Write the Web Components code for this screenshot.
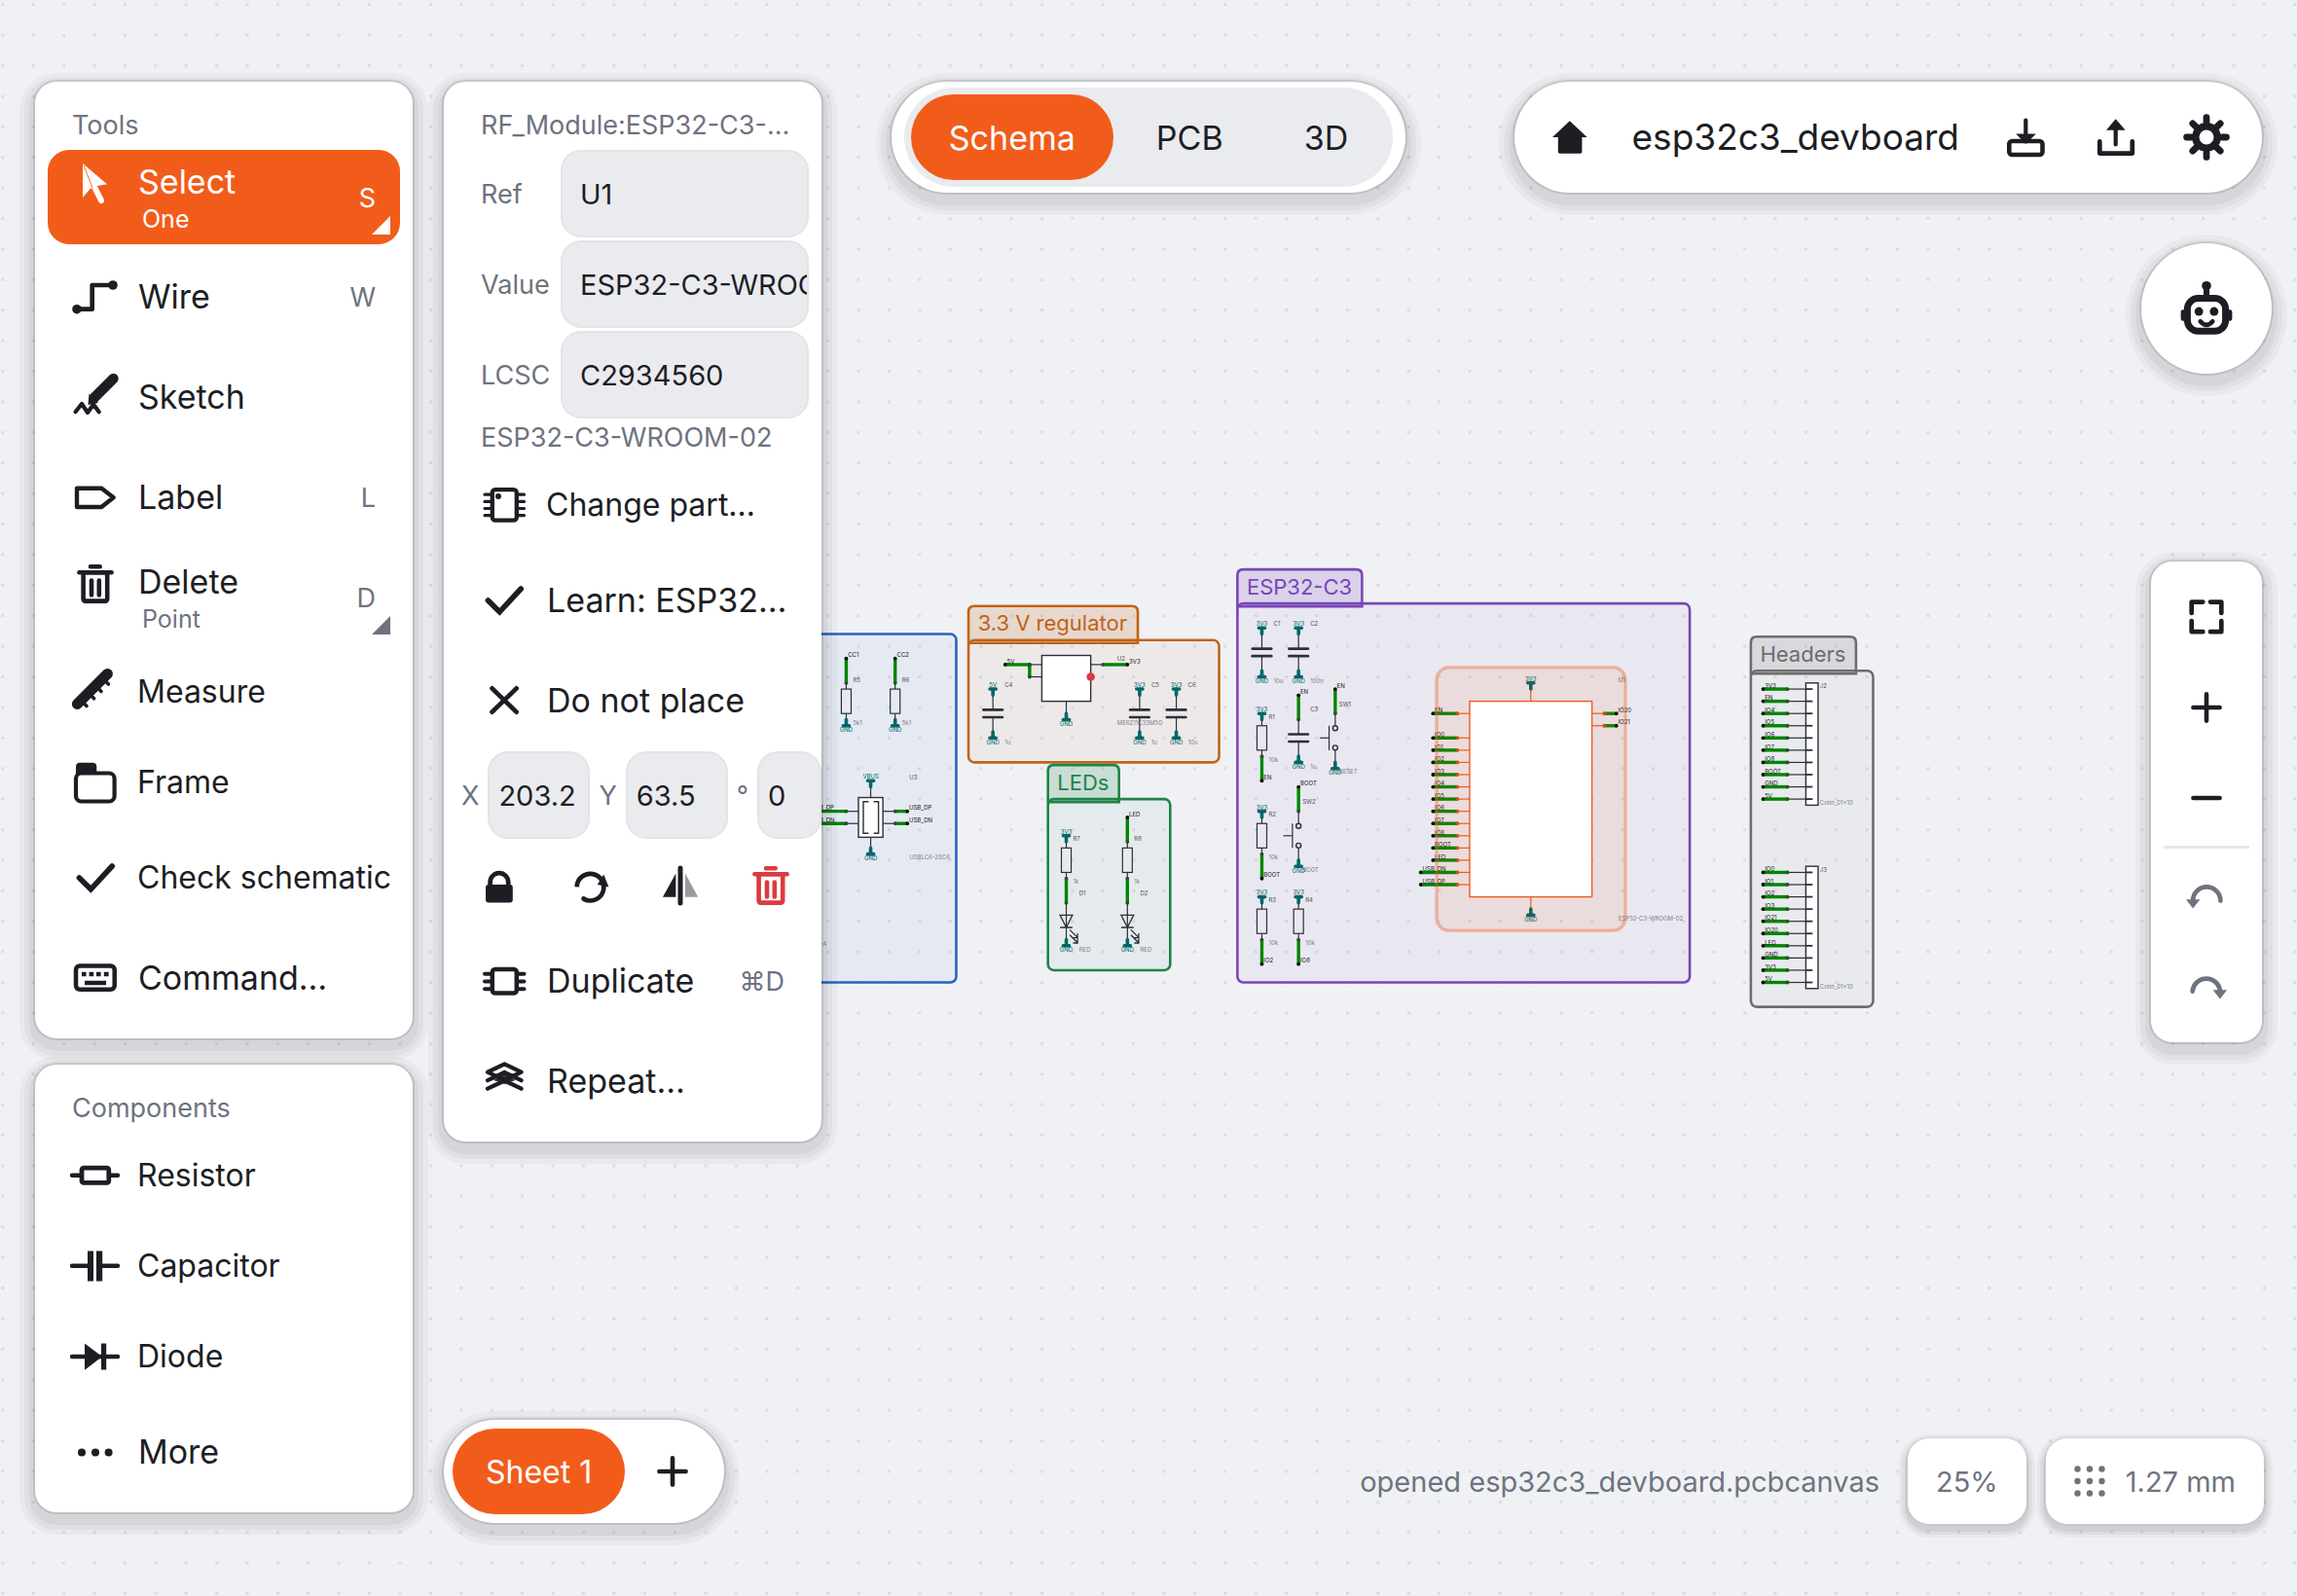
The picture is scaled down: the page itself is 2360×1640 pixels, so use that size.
<!DOCTYPE html>
<html lang="en">
<head>
<meta charset="utf-8">
<title>esp32c3_devboard</title>
<style>
  html, body { margin: 0; height: 100%; }
  body {
    --ink: #1d1e24; --muted: #6e737f; --accent: #f25c1b; --field: #eaebef; --line: #e4e4e5; --danger: #dc3b3e;
    background: #f0f1f5; color: var(--ink);
    font-family: Inter, "Liberation Sans", sans-serif; font-size: 34px; font-optical-sizing: none;
  }
</style>
</head>
<body>
<eda-app></eda-app>
<script>
const define = (name, css, html, setup) => {
  const tpl = document.createElement('template');
  customElements.define(name, class extends HTMLElement {
    connectedCallback() {
      if (this.shadowRoot) return;
      const root = this.attachShadow({ mode: 'open' });
      tpl.innerHTML = `<style>*{box-sizing:border-box}button,input{font:inherit;color:inherit;margin:0;border:0;background:none;padding:0}${css}</style>${typeof html === 'function' ? html(this) : html}`;
      root.append(tpl.content.cloneNode(true));
      if (setup) setup(this, root);
    }
  });
};

/* ---------- icons ---------- */
const trash = '<g stroke-width="4.6"><path d="M19 6.2H28.7M7.4 12.2H40.6"/><rect x="11.6" y="12.2" width="24.6" height="29.4" rx="2"/><path d="M20 20.5V35.5M27.8 20.5V35.5"/></g>';
const ICONS = {
  select: '<path class="f" d="M11 3L36 24.3L25 26.2L18.6 29L11 38Z"/><path stroke-width="6" d="M23 27L30 41"/><path stroke="#f25c1b" stroke-width=".9" d="M12 5L21 28"/>',
  wire: '<path stroke-width="4.7" d="M5 36.7H20.7V12H42"/><circle class="f" cx="5" cy="36.7" r="4.8"/><circle class="f" cx="42" cy="12" r="4.8"/>',
  sketch: '<path stroke-width="10.4" d="M42.5 5L23 24.5"/><path class="f" d="M17.5 20.5L27 30L16.5 32Z"/><path stroke-width="4.2" d="M3.5 39.2L10 31L16 40L22 31.5L27.7 39.2"/>',
  label: '<path stroke-width="4.4" d="M5 14.7H30.3L42.6 24.2L30.3 34H5Z"/>',
  trash,
  measure: '<path stroke-width="11" d="M5.4 36.4L36.4 5.4"/><path stroke-width="3.6" d="M9 32.4L15 38.4M16.6 24.8L22.6 30.8M24 17.4L30 23.4M31.4 10L37.4 16"/>',
  frame: '<rect x="4" y="14.5" width="39.6" height="29" rx="5.5" stroke-width="4.2"/><path class="f" d="M4 20V8q0-4.2 4.2-4.2H21q4.3 0 4.3 4.2V16H8Z"/>',
  check: '<path stroke-width="5.6" stroke-linejoin="miter" d="M7.4 24L19.3 35.8L41.2 12"/>',
  keyboard: '<rect x="4" y="11.4" width="39.7" height="24.4" rx="4" stroke-width="4.5"/><path class="f" d="M10 17.8h4.6v4.4H10zM17.6 17.8h4.6v4.4h-4.6zM25 17.8h4.6v4.4H25zM32.8 17.8h4.8v4.4h-4.8zM13 26.8h22v4.4H13z"/>',
  resistor: '<path stroke-width="4.4" d="M0 23.8H8M40 23.8H47"/><rect x="10" y="16.2" width="27.8" height="15.2" rx="2" stroke-width="4.8"/>',
  capacitor: '<path stroke-width="4.4" d="M0 23.8H16M31 23.8H47"/><path class="f" d="M16 8.6h6v30.8h-6zM25 8.6h6.2v30.8H25z"/>',
  diode: '<path stroke-width="4.4" d="M0 24H47"/><path class="f" d="M13 10.6L31 24L13 37.7ZM30 10.6h5.2v27H30z"/>',
  more: '<g class="f"><circle cx="10" cy="24.4" r="4"/><circle cx="24" cy="24.4" r="4"/><circle cx="37.6" cy="24.4" r="4"/></g>',
  chip: '<rect x="11.8" y="8.2" width="25" height="31.4" rx="3" stroke-width="4.3"/><path stroke-width="3.2" d="M4 13.2H10M4 20.4H10M4 27.5H10M4 34.6H10M38.5 13.2H44.5M38.5 20.4H44.5M38.5 27.5H44.5M38.5 34.6H44.5"/><circle class="f" cx="18" cy="15" r="3"/>',
  cross: '<path stroke-width="4.8" d="M11.6 11.4L36.6 35.6M36.6 11.4L11.6 35.6"/>',
  lock: '<rect class="f" x="10" y="23" width="27.8" height="18.6" rx="3"/><path stroke-width="4.7" d="M14.6 26V20.4a9.3 9.3 0 0 1 18.6 0V26"/>',
  rotate: '<g transform="translate(1.8 1)"><path stroke-width="4.7" d="M15.8 36.6A13.8 13.8 0 1 0 8.9 24.4" stroke-linecap="butt"/><circle class="f" cx="15.8" cy="36.4" r="2.4"/><path class="f" d="M36.5 11.6L41.6 24.4L30 22Z"/></g>',
  flip: '<path stroke-width="5" d="M24 6V42"/><path class="f" d="M19.4 11.6V35.8H6Z"/><path class="f" opacity=".45" d="M29 11.6V35.8H42.2Z"/>',
  duplicate: '<rect x="11.8" y="12" width="25" height="24.6" rx="3" stroke-width="4.5"/><path stroke-width="4" d="M4 16.7H10M4 24.4H10M4 32.2H10M38.5 16.7H44.5M38.5 24.4H44.5M38.5 32.2H44.5"/>',
  repeat: '<path stroke-width="4.2" d="M24.3 15L7 23.2M24.3 15L41.6 23.2M7 14.7L24.3 6.4L41.6 14.7L24.3 23Z"/><path stroke-width="4.2" d="M7 31.7L24.3 23.5L41.6 31.7"/><path class="f" d="M13 23L24.3 16L35.6 23L24.3 27Z" opacity=".9"/>',
  home: '<path class="f" d="M23.8 7.2L41.6 24H36.4V39q0 1.8-1.8 1.8H13.6q-1.8 0-1.8-1.8V24H6Z"/>',
  download: '<path stroke-width="4.2" d="M24.3 6.6V22"/><rect x="7.3" y="28" width="34.2" height="14" rx="3" stroke-width="4.6"/><path class="f" d="M14.2 20.6H34.8L24.3 31Z"/>',
  upload: '<path stroke-width="4.2" d="M23.7 12V31.4"/><path class="f" d="M23.7 5.2L33.6 16.8H14Z"/><path stroke-width="4.7" d="M7.3 28.4V40.6H40.8V28.4"/>',
  gear: '<circle cx="24" cy="24" r="11.2" stroke-width="7.4"/><path stroke-width="6.8" d="M24 8V3.6M24 40V44.4M8 24H3.6M40 24H44.4M13 13L9.8 9.8M35 13L38.2 9.8M13 35L9.8 38.2M35 35L38.2 38.2"/>',
  fit: '<path stroke-width="4.7" d="M8.7 20V8.6H20.3M28 8.6H39.3V20M39.3 28V39.2H28M20.3 39.2H8.7V28"/>',
  plus: '<path stroke-width="4.6" d="M24 10.4V37.6M10.4 24H37.6"/>',
  minus: '<path stroke-width="4.6" d="M10.4 24H37.6"/>',
  undo: '<path stroke-width="4.7" d="M10 28.6A14.2 14.2 0 0 1 38.4 28.6"/><path class="f" d="M3 27.2H17.4L10 36.6Z"/>',
  redo: '<path stroke-width="4.7" d="M9.7 28.6A14.2 14.2 0 0 1 38 28.6"/><path class="f" d="M30.6 27.2H45L38 36.6Z"/>',
  grid: '<g class="f">' + [11.5, 24, 36.5].map(y => [11.5, 24, 36.5].map(x => `<circle cx="${x}" cy="${y}" r="3.2"/>`).join('')).join('') + '</g>',
  robot: '<circle class="f" cx="24" cy="4" r="4.1"/><path stroke-width="5.2" d="M24 6V13"/><rect x="7.2" y="15" width="33.6" height="29" rx="9.5" stroke-width="6"/><rect class="f" x="1.4" y="25" width="5" height="10" rx="2"/><rect class="f" x="41.6" y="25" width="5" height="10" rx="2"/><circle class="f" cx="17.3" cy="26.6" r="3.8"/><circle class="f" cx="30.7" cy="26.6" r="3.8"/><path stroke-width="4" d="M18.6 35.4Q24 41.6 29.4 35.4"/>'
};
define('eda-icon', `
  :host{display:block;flex:none;width:48px;height:48px}
  :host([large]){width:56px;height:56px}
  :host([tight]){width:32px;height:32px}
  svg{display:block;width:100%;height:100%;overflow:visible;fill:none;stroke:currentColor;stroke-linecap:round;stroke-linejoin:round}
  .f{fill:currentColor;stroke:none}`,
  el => `<svg viewBox="${el.hasAttribute('tight') ? '8 8 32 32' : '0 0 48 48'}" aria-hidden="true">${ICONS[el.getAttribute('name')]}</svg>`);

/* ---------- raised surfaces ---------- */
define('eda-card', `
  :host{display:block;background:#fff;border-radius:22px;padding:13px;
    box-shadow:0 0 0 2px rgba(0,0,0,.11),0 7px 0 6px rgba(0,0,0,.042),0 7px 0 11px rgba(0,0,0,.036),0 7px 0 16px rgba(0,0,0,.032)}
  :host([pill]){border-radius:67px}
  :host([row]){display:flex;align-items:center;gap:5px}
  :host([stack]){display:flex;flex-direction:column;gap:5px}
  :host([flat]){padding:6px 13px}
  :host([snug]){padding:9px}
  :host([round]){padding:23px}`, '<slot></slot>');

define('eda-chip', `
  :host{display:block}
  button{display:flex;align-items:center;gap:21px;height:88px;padding:0 29px;background:#fff;border-radius:22px;color:var(--muted);font-size:29px;white-space:nowrap;
    box-shadow:0 0 0 2px rgba(0,0,0,.035),0 5px 0 3px rgba(0,0,0,.06),0 5px 0 6px rgba(0,0,0,.038),0 5px 0 9px rgba(0,0,0,.034)}`,
  '<button type="button"><slot></slot></button>');

define('eda-heading', `
  :host{display:block}
  h2{margin:0;padding:16px 0 9px 25px;font-size:27px;line-height:32px;font-weight:400;color:var(--muted);white-space:nowrap}`,
  '<h2><slot></slot></h2>');

/* ---------- menu rows ---------- */
define('eda-tool', `
  :host{display:block}
  button{position:relative;display:grid;grid-template-columns:48px 1fr auto;column-gap:20px;align-items:center;width:100%;height:98px;
    padding:0 25px;border-radius:22px;text-align:left;white-space:nowrap}
  .name{line-height:44px;min-width:0}
  :host([compact]) button{height:88px}
  :host([small]) button{font-size:32px;column-gap:19px}
  .sub{display:block;padding-left:4px;font-size:25px;line-height:32px;color:var(--muted)}
  kbd{font:inherit;font-size:27px;color:var(--muted)}
  :host([mode]) button{height:97px;align-items:start;padding-top:11px;padding-bottom:10px}
  :host([mode]) kbd{align-self:center}
  .more{position:absolute;right:10px;bottom:10px;width:19px;height:19px;background:var(--muted);clip-path:polygon(100% 0,100% 100%,0 100%)}
  :host([active]) button{background:var(--accent);color:#fff}
  :host([active]) .sub,:host([active]) kbd{color:#fff}
  :host([active]) .more{background:#fff}`,
  el => {
    const a = n => el.getAttribute(n);
    return `<button type="button"><eda-icon name="${a('icon')}"></eda-icon><span class="name"><slot></slot>${a('mode') ? `<span class="sub">${a('mode')}</span>` : ''}</span>${a('key') ? `<kbd>${a('key')}</kbd>` : ''}${a('mode') ? '<span class="more"></span>' : ''}</button>`;
  });

define('eda-icon-button', `
  :host{display:block}
  button{display:grid;place-items:center;width:88px;height:88px;border-radius:22px}
  :host([dim]) button{color:var(--muted)}
  :host([danger]) button{color:var(--danger)}`,
  el => `<button type="button" aria-label="${el.getAttribute('label')}"><eda-icon name="${el.getAttribute('icon')}" ${el.hasAttribute('large') ? 'large' : ''}></eda-icon></button>`);

define('eda-tab', `
  :host{display:block}
  button{height:88px;padding:0 39px;border-radius:44px;white-space:nowrap}
  :host([sheet]) button{font-size:32px;padding:0 34px}
  :host([active]) button{background:var(--accent);color:#fff}`,
  '<button type="button"><slot></slot></button>');

/* ---------- property fields ---------- */
define('eda-field', `
  :host{display:grid;grid-template-columns:82px 1fr;align-items:center;padding-left:25px}
  label{font-size:27px;color:var(--muted)}
  input{width:100%;min-width:0;height:90px;padding:0 0 0 18px;border:2px solid var(--line);border-radius:21px;background:var(--field);font-size:29px}
  :host([inline]){display:flex;gap:9px;padding:0}
  :host([inline]) input{width:105px;padding-left:9px}
  :host([narrow]) input{width:66px}`,
  el => `<label for="v">${el.getAttribute('label')}</label><input id="v" type="text" value="${el.getAttribute('value')}">`);

define('eda-tools', ':host{display:flex;flex-direction:column;gap:27px;width:388px}.rows{display:grid;gap:5px}', `
  <eda-card><eda-heading>Tools</eda-heading><div class="rows">
    <eda-tool icon="select" key="S" mode="One" active>Select</eda-tool>
    <eda-tool icon="wire" key="W">Wire</eda-tool>
    <eda-tool icon="sketch">Sketch</eda-tool>
    <eda-tool icon="label" key="L">Label</eda-tool>
    <eda-tool icon="trash" key="D" mode="Point">Delete</eda-tool>
    <eda-tool icon="measure" small compact>Measure</eda-tool>
    <eda-tool icon="frame" small compact>Frame</eda-tool>
    <eda-tool icon="check" small>Check schematic</eda-tool>
    <eda-tool icon="keyboard">Command…</eda-tool>
  </div></eda-card>
  <eda-card><eda-heading>Components</eda-heading><div class="rows">
    <eda-tool icon="resistor" small compact>Resistor</eda-tool>
    <eda-tool icon="capacitor" small compact>Capacitor</eda-tool>
    <eda-tool icon="diode" small compact>Diode</eda-tool>
    <eda-tool icon="more">More</eda-tool>
  </div></eda-card>`);

define('eda-inspector', `
  :host{display:block;width:388px}
  .fields{display:grid;gap:3px}
  p{margin:0;padding-left:25px;font-size:27px;line-height:40px;color:var(--muted)}
  .rows{display:grid;gap:5px;margin-top:5px}
  .place{display:flex;gap:9px;margin:3px 0 4px 5px}
  .acts{display:flex;gap:5px}`, `
  <eda-card><eda-heading>RF_Module:ESP32-C3-…</eda-heading>
    <div class="fields">
      <eda-field label="Ref" value="U1"></eda-field>
      <eda-field label="Value" value="ESP32-C3-WROOM-02"></eda-field>
      <eda-field label="LCSC" value="C2934560"></eda-field>
    </div>
    <p>ESP32-C3-WROOM-02</p>
    <div class="rows">
      <eda-tool icon="chip" small compact>Change part…</eda-tool>
      <eda-tool icon="check">Learn: ESP32…</eda-tool>
      <eda-tool icon="cross">Do not place</eda-tool>
    </div>
    <div class="place">
      <eda-field inline label="X" value="203.2"></eda-field>
      <eda-field inline label="Y" value="63.5"></eda-field>
      <eda-field inline narrow label="°" value="0"></eda-field>
    </div>
    <div class="acts">
      <eda-icon-button icon="lock" label="Lock"></eda-icon-button>
      <eda-icon-button icon="rotate" label="Rotate"></eda-icon-button>
      <eda-icon-button icon="flip" label="Mirror"></eda-icon-button>
      <eda-icon-button icon="trash" label="Delete" danger></eda-icon-button>
    </div>
    <div class="rows">
      <eda-tool icon="duplicate" key="⌘D">Duplicate</eda-tool>
      <eda-tool icon="repeat">Repeat…</eda-tool>
    </div>
  </eda-card>`);

/* ---------- schematic canvas ---------- */
const U = 6.28, OX = 34.2, OY = 130.3;
const INK = '#2d2f38', TEAL = '#006668', GREEN = '#008500', VAL = '#7b7e87', REF = '#4b4d56', SEL = '#f25c1b';
const X = u => +(OX + u * U).toFixed(2), Y = u => +(OY + u * U).toFixed(2);
const line = (x1, y1, x2, y2, c = INK, w = 1.2) => `<line x1="${X(x1)}" y1="${Y(y1)}" x2="${X(x2)}" y2="${Y(y2)}" stroke="${c}" stroke-width="${w}"/>`;
const rect = (x1, y1, x2, y2, fill, c = INK, w = 1.2, r = 0) => `<rect x="${X(x1)}" y="${Y(y1)}" width="${((x2 - x1) * U).toFixed(2)}" height="${((y2 - y1) * U).toFixed(2)}" rx="${r}" fill="${fill}" stroke="${c}" stroke-width="${w}"/>`;
const dot = (x, y, c, r = 1.9) => `<circle cx="${X(x)}" cy="${Y(y)}" r="${r}" fill="${c}"/>`;
const text = (x, y, s, c, anchor = 'start', dx = 0, dy = 0) => `<text x="${(X(x) + dx).toFixed(1)}" y="${(Y(y) + dy + 2.2).toFixed(1)}" fill="${c}" text-anchor="${anchor}">${s}</text>`;
const wire = (x1, y1, x2, y2, name, sel) =>
  line(x1, y1, x2, y2, GREEN, 3.4) + dot(x1, y1, sel ? '#c4560f' : '#2b4f2f') + (name ? dot(x2, y2, '#061006') + text(x2, y2, name, '#15161b', 'start', 1.8, -3.5) : dot(x2, y2, '#2b4f2f'));
const power = (x, y, name, dir) => {
  const b = y + dir;
  return `<path d="M${X(x)} ${Y(y)}V${Y(b)}M${X(x) - 3.1} ${Y(b)}H${X(x) + 3.1}" stroke="${TEAL}" stroke-width="3.6" stroke-linecap="round" fill="none"/>` + text(x, y + dir * 1.7, name, TEAL, 'middle');
};
const gnd = (x, y) => power(x, y, 'GND', 1), vcc = (x, y, n) => power(x, y, n, -1);
const cap = (x, y, ref, val) =>
  line(x, y - 3, x, y - .6) + line(x, y + .6, x, y + 3) +
  [-.6, .6].map(d => `<path d="M${X(x) - 9.8} ${Y(y + d)}H${X(x) + 9.8}" stroke="${INK}" stroke-width="2.6" stroke-linecap="round"/>`).join('') +
  text(x, y - 4.7, ref, REF, 'start', 12) + text(x, y + 4.7, val, VAL, 'start', 12);
const res = (x, y, ref, val) =>
  line(x, y - 3, x, y - 2) + line(x, y + 2, x, y + 3) + rect(x - .8, y - 2, x + .8, y + 2, 'none') +
  text(x, y - 3.5, ref, REF, 'start', 7) + text(x, y + 3.5, val, VAL, 'start', 7);
const sw = (x, y, ref, val) =>
  line(x, y - 4, x, y - 2) + line(x, y + 2, x, y + 4) + line(x - 1, y - 2, x - 1, y + 2) + line(x - 2.5, y, x - 1, y) +
  [-1.6, 1.6].map(d => `<circle cx="${X(x)}" cy="${Y(y + d)}" r="2.5" fill="none" stroke="${INK}" stroke-width="1.4"/>`).join('') +
  text(x, y - 5.5, ref, REF, 'start', 4) + text(x, y + 5.5, val, VAL, 'start', 4);
const led = (x, y, ref) => {
  const cx = X(x), t = Y(y - 1), b = Y(y + 1);
  const arrow = oy => `M${cx + 3.6} ${b + oy}l8 8m0 -4.4v4.6h-4.6`;
  return line(x, y - 3, x, y + 3) + `<path d="M${cx - 6.4} ${t}H${cx + 6.4}L${cx} ${b}ZM${cx - 6.4} ${b}H${cx + 6.4}${arrow(2.4)}${arrow(7.8)}" fill="none" stroke="${INK}" stroke-width="1.3"/>` +
    text(x, y - 4.6, ref, REF, 'start', 13.2) + text(x, y + 4.6, 'RED', VAL, 'start', 13.2);
};
const frame = (x1, y1, x2, y2, c, name, w) =>
  rect(x1, y1, x2, y2, c, c, 2.6, 6).replace('fill=', 'fill-opacity=".05" fill=') +
  (name ? `<path d="M${X(x1)} ${Y(y1) + 3}V${Y(y1) - 29}q0-6 6-6h${w - 12}q6 0 6 6v32Z" fill="${c}" fill-opacity=".18" stroke="${c}" stroke-width="2.6"/><text class="tag" x="${X(x1) + 9.6}" y="${Y(y1) - 9.6}" fill="${c}">${name}</text>` : '');
const header = (y, ref, names) =>
  rect(290, y - 1, 292, y + 19, '#fff', INK, 1.4) +
  names.map((n, i) => line(287, y + 2 * i, 290, y + 2 * i) + line(290, y + 2 * i, 291.1, y + 2 * i, INK, 1.8) + wire(287, y + 2 * i, 283, y + 2 * i, n)).join('') +
  text(292, y - .5, ref, REF, 'start', 1.8) + text(292, y + 18.6, 'Conn_01x10', VAL, 'start', 1.8);

const schematic = () => {
  let s = '';
  s += frame(100, 83, 151, 140, '#2664c0');
  s += frame(153, 84, 194, 104, '#c06418', '3.3 V regulator', 174);
  s += frame(166, 110, 186, 138, '#1e8448', 'LEDs', 73);
  s += frame(197, 78, 271, 140, '#7946b8', 'ESP32-C3', 128);
  s += frame(281, 89, 301, 144, '#6d6d6e', 'Headers', 108);
  /* USB */
  s += wire(133, 91, 133, 87, 'CC1') + res(133, 94, 'R5', '5k1') + gnd(133, 97);
  s += wire(141, 91, 141, 87, 'CC2') + res(141, 94, 'R6', '5k1') + gnd(141, 97);
  s += line(137, 108, 137, 109.75) + line(137, 116.25, 137, 118) + vcc(137, 108, 'VBUS') + gnd(137, 118);
  s += rect(135, 109.75, 139, 116.25, '#fff', INK, 1.4);
  s += `<path d="M892.4 823.8H887V856.2H892.4M897.6 823.8H902.6V856.2H897.6" fill="none" stroke="${INK}" stroke-width="1.4"/>`;
  [['USB_DP', 112], ['USB_DN', 114]].forEach(([n, y]) => {
    s += line(133, y, 135, y) + line(139, y, 141, y) + wire(133, y, 127, y, n) + wire(141, y, 143, y, n);
  });
  s += text(143, 106.4, 'U3', REF, 'start', 2) + text(143, 119.5, 'USBLC6-2SC6', VAL, 'start', 2) + text(129.8, 133.6, '-A', VAL, 'end');
  /* regulator */
  s += rect(165, 86.5, 173, 94, '#fff', INK, 1.4) + line(163, 88, 165, 88) + line(163, 90, 165, 90) + line(173, 88, 175, 88) + line(169, 94, 169, 96);
  s += wire(163, 90, 163, 88) + wire(163, 88, 159, 88, '5V') + wire(175, 88, 179, 88, '3V3') + dot(173, 90, '#dc3c42', 4.3) + gnd(169, 96);
  s += text(177, 87, 'U2', REF, 'start', 2) + text(177, 97.5, 'ME6211C33M5G', VAL, 'start', 2);
  s += [[157, 'C4', '1u', '5V'], [181, 'C5', '1u', '3V3'], [187, 'C6', '10u', '3V3']].map(([x, r, v, p]) => cap(x, 96, r, v) + vcc(x, 93, p) + gnd(x, 99)).join('');
  /* LEDs */
  s += res(169, 120, 'R7', '1k') + vcc(169, 117, '3V3') + wire(169, 123, 169, 127) + led(169, 130, 'D1') + gnd(169, 133);
  s += res(179, 120, 'R8', '1k') + wire(179, 117, 179, 113, 'LED') + wire(179, 123, 179, 127) + led(179, 130, 'D2') + gnd(179, 133);
  /* module passives */
  s += cap(201, 86, 'C1', '10u') + vcc(201, 83, '3V3') + gnd(201, 89);
  s += cap(207, 86, 'C2', '100n') + vcc(207, 83, '3V3') + gnd(207, 89);
  s += cap(207, 100, 'C3', '1u') + wire(207, 97, 207, 93, 'EN') + gnd(207, 103);
  s += [[201, 100, 'R1', 'EN'], [201, 116, 'R2', 'BOOT'], [201, 130, 'R3', 'IO2'], [207, 130, 'R4', 'IO8']].map(([x, y, r, n]) => res(x, y, r, '10k') + vcc(x, y - 3, '3V3') + wire(x, y + 3, x, y + 7, n)).join('');
  s += sw(213, 100, 'SW1', 'RESET') + wire(213, 96, 213, 92, 'EN') + gnd(213, 104);
  s += sw(207, 116, 'SW2', 'BOOT') + wire(207, 112, 207, 108, 'BOOT') + gnd(207, 120);
  /* module */
  s += rect(235, 94, 255, 126, '#fff', SEL, 1.4) + line(245, 92, 245, 94, SEL) + line(245, 126, 245, 128, SEL) + vcc(245, 92, '3V3') + gnd(245, 128);
  const pins = [['EN', 96], ...[0, 1, 2, 3, 4, 5, 6, 7, 8].map(i => ['IO' + i, 100 + 2 * i]), ['BOOT', 118], ['LED', 120], ['USB_DN', 122], ['USB_DP', 124]];
  s += pins.map(([n, y]) => line(233, y, 235, y, SEL) + wire(233, y, y > 121 ? 227 : 229, y, n, true)).join('');
  s += [['IO20', 96], ['IO21', 98]].map(([n, y]) => line(255, y, 257, y, SEL) + wire(257, y, 259, y, n, true)).join('');
  s += text(259, 90.5, 'U1', REF, 'start', 2) + text(259, 129.5, 'ESP32-C3-WROOM-02', VAL, 'start', 2);
  s += `<path d="M1489 685.7H1657a13 13 0 0 1 13 13V943.3a13 13 0 0 1 -13 13H1489a13 13 0 0 1 -13 -13V698.7a13 13 0 0 1 13 -13Z" fill="none" stroke="${SEL}" stroke-opacity=".36" stroke-width="3.4"/>`;
  s += `<path fill-rule="evenodd" d="M1489 685.7H1657a13 13 0 0 1 13 13V943.3a13 13 0 0 1 -13 13H1489a13 13 0 0 1 -13 -13V698.7a13 13 0 0 1 13 -13ZM1510 720.6V921.6H1635.6V720.6Z" fill="${SEL}" fill-opacity=".09"/>`;
  s += header(92, 'J2', ['3V3', 'EN', 'IO4', 'IO5', 'IO6', 'IO7', 'IO8', 'BOOT', 'GND', '5V']);
  s += header(122, 'J3', ['IO0', 'IO1', 'IO2', 'IO3', 'IO21', 'IO20', 'LED', 'GND', '3V3', '5V']);
  return s;
};
define('eda-canvas', `
  :host{display:block}
  svg{display:block;width:100%;height:100%}
  text{font-size:6px}
  .tag{font-size:22px}`,
  () => `<svg role="img" aria-label="Schematic"><defs><pattern id="dots" x="2.8" y="4.7" width="31.4" height="31.4" patternUnits="userSpaceOnUse" patternTransform="translate(-1.5 -1.5)"><rect width="3" height="3" rx=".6" fill="#000" fill-opacity=".085"/></pattern></defs><rect width="100%" height="100%" fill="url(#dots)"/>${schematic()}</svg>`);

/* ---------- application shell ---------- */
define('eda-app', `
  :host{display:grid;min-height:100vh}
  :host>*{grid-area:1/1;min-width:0;min-height:0}
  .layer{padding:84px 36px 75px;display:flex;gap:32px}
  .left{display:flex;flex-direction:column;justify-content:space-between;align-items:flex-start}
  .top{flex-direction:column;gap:52px;align-items:flex-end;justify-content:flex-start}
  header{display:grid;grid-template-columns:1fr auto 1fr;align-items:start;width:100%}
  .tabs{grid-column:2}
  .file{justify-self:end}
  .seg{display:flex;gap:5px;padding:7px;border-radius:51px;background:var(--field)}
  .title{padding:0 19px 0 15px;font-size:37px;line-height:88px;white-space:nowrap}
  .bot{margin-right:-10px}
  .side{padding-bottom:76px;justify-content:flex-end;align-items:center}
  hr{width:88px;height:3px;margin:0;border:0;background:#e6e6e6}
  .foot{justify-content:flex-end;align-items:flex-end}
  footer{display:flex;align-items:center;gap:20px;margin:0 -2px -1px 0;font-size:29px;color:var(--muted)}
  output{margin-right:9px}`, `
  <eda-canvas></eda-canvas>
  <div class="layer">
    <eda-tools></eda-tools>
    <div class="left">
      <eda-inspector></eda-inspector>
      <eda-card pill row snug><eda-tab active sheet>Sheet 1</eda-tab><eda-icon-button icon="plus" label="Add sheet"></eda-icon-button></eda-card>
    </div>
  </div>
  <div class="layer top">
    <header>
      <eda-card class="tabs" pill flat><div class="seg"><eda-tab active>Schema</eda-tab><eda-tab>PCB</eda-tab><eda-tab>3D</eda-tab></div></eda-card>
      <eda-card class="file" pill row>
        <eda-icon-button icon="home" label="Home"></eda-icon-button>
        <button type="button" class="title">esp32c3_devboard</button>
        <eda-icon-button icon="download" label="Save"></eda-icon-button>
        <eda-icon-button icon="upload" label="Export"></eda-icon-button>
        <eda-icon-button icon="gear" label="Settings"></eda-icon-button>
      </eda-card>
    </header>
    <eda-card class="bot" pill round><eda-icon-button icon="robot" label="Assistant" large></eda-icon-button></eda-card>
  </div>
  <div class="layer side">
    <eda-card stack>
      <eda-icon-button icon="fit" label="Zoom to fit"></eda-icon-button>
      <eda-icon-button icon="plus" label="Zoom in"></eda-icon-button>
      <eda-icon-button icon="minus" label="Zoom out"></eda-icon-button>
      <hr>
      <eda-icon-button icon="undo" label="Undo" dim></eda-icon-button>
      <eda-icon-button icon="redo" label="Redo" dim></eda-icon-button>
    </eda-card>
  </div>
  <div class="layer foot">
    <footer><output>opened esp32c3_devboard.pcbcanvas</output><eda-chip>25%</eda-chip><eda-chip><eda-icon name="grid" tight></eda-icon>1.27 mm</eda-chip></footer>
  </div>`);
</script>
</body>
</html>
